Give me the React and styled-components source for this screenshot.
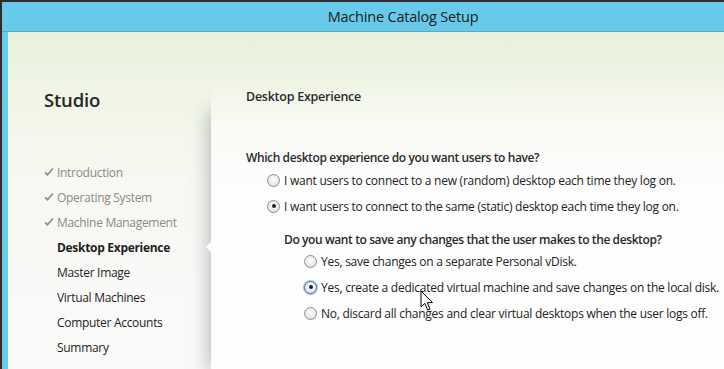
import React from 'react';
import styled, { createGlobalStyle } from 'styled-components';

const GlobalStyle = createGlobalStyle`
	html, body {
		margin: 0;
		padding: 0;
		background: #2d2d2d;
	}
	body {
		font-family: 'Open Sans', 'Noto Sans', sans-serif;
	}
`;

const steps = [
	{ label: 'Introduction', state: 'done' },
	{ label: 'Operating System', state: 'done' },
	{ label: 'Machine Management', state: 'done' },
	{ label: 'Desktop Experience', state: 'current' },
	{ label: 'Master Image' },
	{ label: 'Virtual Machines' },
	{ label: 'Computer Accounts' },
	{ label: 'Summary' },
];

const CheckIcon = () => (
	<svg width="10" height="9" viewBox="0 0 10 9">
		<path d="M0.5 5 L3.5 8 L9.5 1 L8.3 0 L3.5 5.6 L1.7 3.8 Z" fill="#8c8c8c" />
	</svg>
);

const Cursor = () => (
	<svg width="14" height="22" viewBox="0 0 14 22">
		<path
			d="M1 1 L1 17 L4.8 13.4 L7.6 20 L10 19 L7.3 12.6 L12.5 12.6 Z"
			fill="#fff"
			stroke="#000"
			strokeWidth="1"
			strokeLinejoin="round"
		/>
	</svg>
);

const App = () => {
	return (
		<>
			<GlobalStyle />
			<Window>
				<TitleBar>Machine Catalog Setup</TitleBar>
				<Body>
					<Sidebar>
						<Brand>Studio</Brand>
						<StepList>
							{steps.map((s) => (
								<Step key={s.label} state={s.state}>
									<CheckSlot>{s.state === 'done' && <CheckIcon />}</CheckSlot>
									{s.label}
									{s.state === 'current' && <Notch />}
								</Step>
							))}
						</StepList>
					</Sidebar>
					<Panel>
						<Heading>Desktop Experience</Heading>
						<Question gap={44}>Which desktop experience do you want users to have?</Question>
						<Options indent={21}>
							<Option>
								<Radio />I want users to connect to a new (random) desktop each time they log on.
							</Option>
							<Option>
								<Radio checked />I want users to connect to the same (static) desktop each time they log on.
							</Option>
						</Options>
						<SubGroup>
							<Question gap={12}>Do you want to save any changes that the user makes to the desktop?</Question>
							<Options indent={20} offset={-1}>
								<Option>
									<Radio />Yes, save changes on a separate Personal vDisk.
								</Option>
								<Option>
									<Radio checked focused />Yes, create a dedicated virtual machine and save changes on the local disk.
									<CursorWrap>
										<Cursor />
									</CursorWrap>
								</Option>
								<Option>
									<Radio />No, discard all changes and clear virtual desktops when the user logs off.
								</Option>
							</Options>
						</SubGroup>
					</Panel>
				</Body>
			</Window>
		</>
	);
};

const Window = styled.div`
	width: 724px;
	height: 369px;
	box-sizing: border-box;
	padding: 2px 0 0 2px;
	display: flex;
	flex-direction: column;
	background: #2d2d2d;
	overflow: hidden;
`;

const TitleBar = styled.div`
	height: 29px;
	flex-shrink: 0;
	background: #67caea;
	color: #1b1b1b;
	font-family: 'Open Sans', sans-serif;
	font-size: 14.5px;
	letter-spacing: -0.2px;
	display: flex;
	align-items: center;
	justify-content: center;
	padding-left: 80px;
	border-bottom: 1px solid #5aa9c6;
`;

const Body = styled.div`
	flex: 1;
	display: flex;
	border-left: 6px solid #67caea;
	background: linear-gradient(to bottom, #e9f0db 0px, #f0f5e6 60px, #f6f8f0 130px, #f9f9f8 260px);
`;

const Sidebar = styled.div`
	width: 203px;
	flex-shrink: 0;
	padding: 55px 0 0 36px;
	box-sizing: border-box;
`;

const Brand = styled.div`
	font-family: 'Open Sans', sans-serif;
	font-size: 18.5px;
	font-weight: 600;
	color: #262626;
	letter-spacing: -0.2px;
`;

const StepList = styled.div`
	margin-top: 48px;
	display: flex;
	flex-direction: column;
`;

const Step = styled.div`
	position: relative;
	height: 25px;
	display: flex;
	align-items: center;
	font-size: 12px;
	letter-spacing: -0.3px;
	color: ${(p) => (p.state === 'done' ? '#8a8a8a' : '#1e1e1e')};
	font-weight: ${(p) => (p.state === 'current' ? 700 : 400)};
`;

const CheckSlot = styled.span`
	width: 13px;
	display: inline-flex;
	align-items: center;
`;

const Notch = styled.span`
	position: absolute;
	right: -1px;
	top: 6px;
	width: 0;
	height: 0;
	border-top: 6px solid transparent;
	border-bottom: 6px solid transparent;
	border-right: 6px solid #fff;
`;

const Panel = styled.div`
	flex: 1;
	margin-top: 57px;
	padding: 0 0 0 35px;
	background: linear-gradient(to bottom, #f2f6e9 0px, #f9fbf5 40px, #fdfdfd 90px, #fdfdfd 100%);
	box-shadow: -14px 12px 16px -10px rgba(90, 95, 110, 0.35);
	color: #222;
	font-size: 12px;
	letter-spacing: -0.25px;
`;

const Heading = styled.div`
	height: 16px;
	line-height: 16px;
	font-weight: 600;
	font-size: 12.5px;
	color: #2a2a2a;
`;

const Question = styled.div`
	font-weight: 600;
	color: #2a2a2a;
	height: 18px;
	line-height: 18px;
	letter-spacing: -0.4px;
	margin-top: ${(p) => p.gap}px;
`;

const Options = styled.div`
	display: flex;
	flex-direction: column;
	padding-left: ${(p) => p.indent}px;
	margin-top: ${(p) => p.offset || 0}px;
`;

const Option = styled.div`
	position: relative;
	height: 26px;
	display: flex;
	align-items: center;
	color: #222;
`;

const Radio = styled.span`
	width: 13px;
	height: 13px;
	border-radius: 50%;
	margin-right: 4px;
	box-sizing: border-box;
	border: 1px solid ${(p) => (p.focused ? '#3d6fb0' : '#8e8e8e')};
	background: radial-gradient(circle at 50% 40%, #fdfdfd 0%, #e9e9e9 60%, #d2d2d2 100%);
	position: relative;
	flex-shrink: 0;
	box-shadow: ${(p) => (p.focused ? '0 0 0 1px #9cc0ea' : 'none')};
	&::after {
		content: '';
		display: ${(p) => (p.checked ? 'block' : 'none')};
		position: absolute;
		left: 3.5px;
		top: 3.5px;
		width: 4px;
		height: 4px;
		border-radius: 50%;
		background: #222;
	}
`;

const SubGroup = styled.div`
	padding-left: 38px;
`;

const CursorWrap = styled.span`
	position: absolute;
	left: 116px;
	top: 16px;
	pointer-events: none;
`;

export default App;
